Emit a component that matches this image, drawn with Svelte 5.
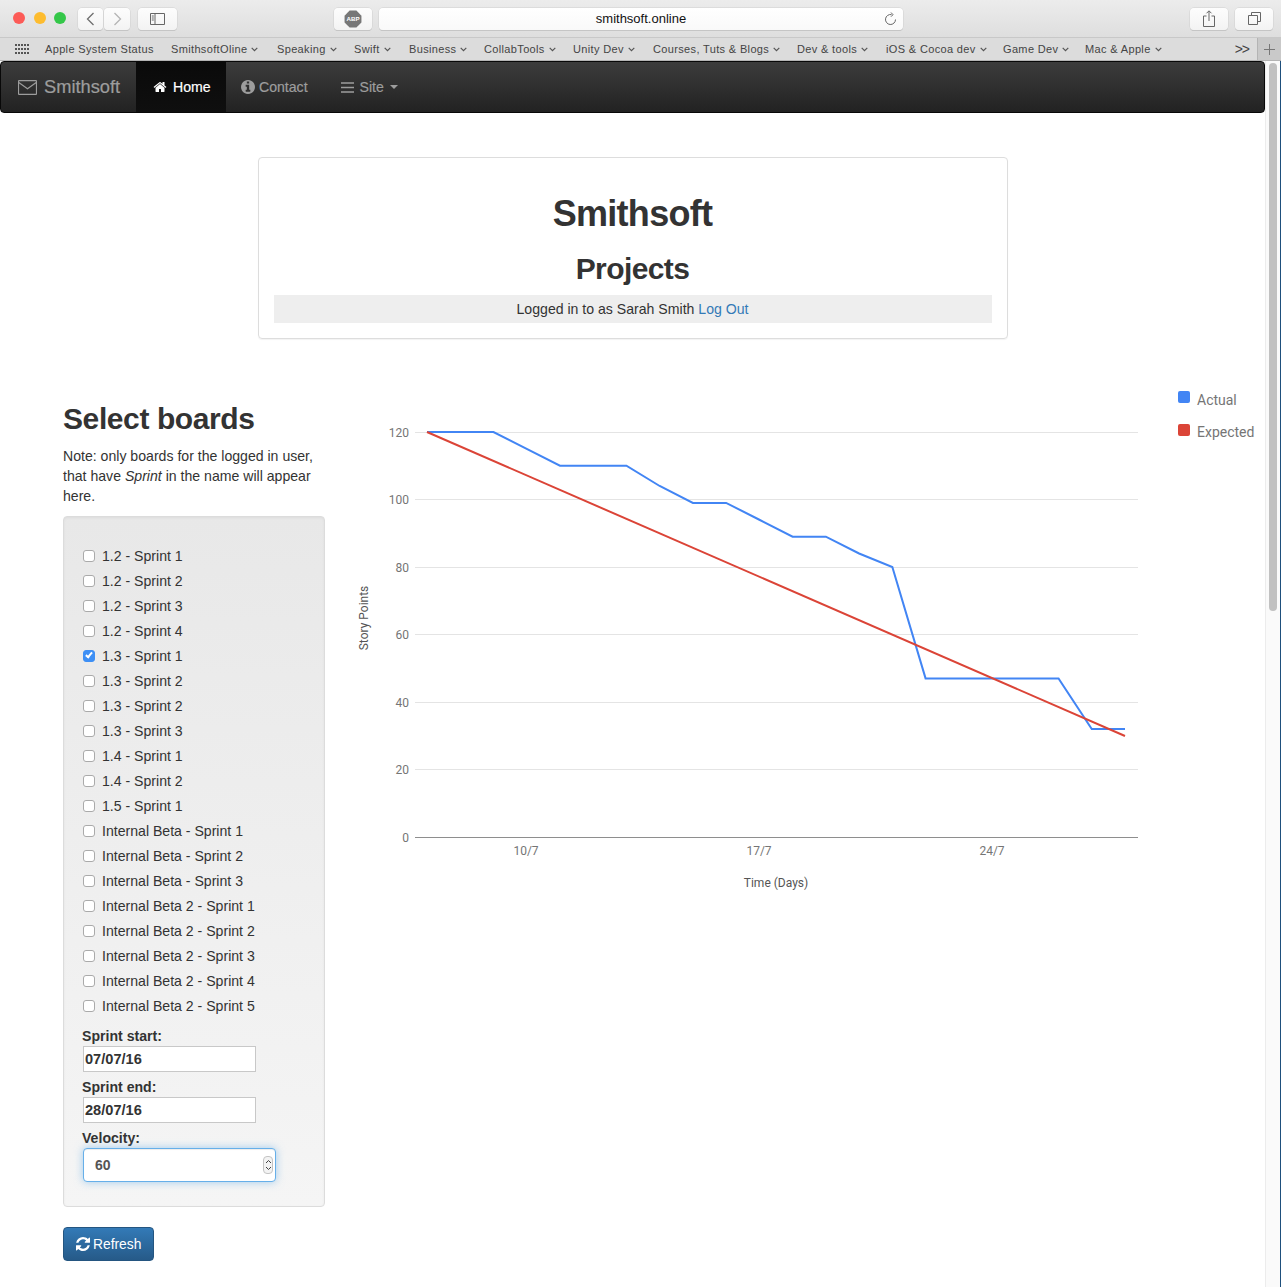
<script>
  // name and the width each bookmark takes up to the next one
  const bookmarks = [
    ['SmithsoftOline', 106],
    ['Speaking', 77],
    ['Swift', 55],
    ['Business', 75],
    ['CollabTools', 89],
    ['Unity Dev', 80],
    ['Courses, Tuts & Blogs', 144],
    ['Dev & tools', 89],
    ['iOS & Cocoa dev', 117],
    ['Game Dev', 82],
    ['Mac & Apple', 90]
  ];

  const boards = [
    '1.2 - Sprint 1', '1.2 - Sprint 2', '1.2 - Sprint 3', '1.2 - Sprint 4',
    '1.3 - Sprint 1', '1.3 - Sprint 2', '1.3 - Sprint 2', '1.3 - Sprint 3',
    '1.4 - Sprint 1', '1.4 - Sprint 2', '1.5 - Sprint 1',
    'Internal Beta - Sprint 1', 'Internal Beta - Sprint 2', 'Internal Beta - Sprint 3',
    'Internal Beta 2 - Sprint 1', 'Internal Beta 2 - Sprint 2', 'Internal Beta 2 - Sprint 3',
    'Internal Beta 2 - Sprint 4', 'Internal Beta 2 - Sprint 5'
  ];

  // chart scale, in page pixels
  const xAt = (d) => 427 + (698 / 21) * d;
  const yAt = (v) => 837 - v * 3.375;

  const actual = [120, 120, 120, 115, 110, 110, 110, 104, 99, 99, 94, 89, 89, 84, 80, 47, 47, 47, 47, 47, 32, 32];
  const actualPts = actual.map((v, d) => `${xAt(d)},${yAt(v)}`).join(' ');
  const yTicks = [120, 100, 80, 60, 40, 20];
  const xTicks = [['10/7', 526], ['17/7', 759], ['24/7', 992]];
</script>

<div class="window">
  <header class="toolbar">
    <div class="lights">
      <span class="light red"></span>
      <span class="light yellow"></span>
      <span class="light green"></span>
    </div>
    <div class="btn-pair">
      <button class="tool narrow" aria-label="Back">
        <svg width="9" height="14" viewBox="0 0 9 14"><path d="M7.5 1 1.5 7l6 6" fill="none" stroke="#6e6e6e" stroke-width="1.3"/></svg>
      </button>
      <button class="tool narrow" aria-label="Forward">
        <svg width="9" height="14" viewBox="0 0 9 14"><path d="M1.5 1l6 6-6 6" fill="none" stroke="#b4b4b4" stroke-width="1.3"/></svg>
      </button>
    </div>
    <button class="tool side" aria-label="Sidebar">
      <svg width="15" height="12" viewBox="0 0 15 12"><path d="M.5.5h14v11H.5zM5 .5v11M1.8 3h2M1.8 5h2M1.8 7h2" fill="none" stroke="#666"/></svg>
    </button>
    <button class="tool abp" aria-label="Adblock">
      <svg width="18" height="18" viewBox="0 0 16 16">
        <path d="M5 .5h6L15.500 5v6L11 15.500H5L.5 11V5z" fill="#777"/>
        <text x="8" y="10.200" text-anchor="middle" class="abp-text">ABP</text>
      </svg>
    </button>
    <div class="url">
      <span>smithsoft.online</span>
      <svg class="reload" width="13" height="14" viewBox="0 0 13 14"><path d="M7.500 2.600A5 5 0 1 0 11.500 7.500M7 .5l2 2.200-2 2" fill="none" stroke="#666" stroke-width="1"/></svg>
    </div>
    <button class="tool share" aria-label="Share">
      <svg width="12" height="17" viewBox="0 0 12 17"><path d="M3.500 6H.5v10.500h11V6h-3M6 11V1M3.500 3.300 6 .8l2.500 2.500" fill="none" stroke="#666"/></svg>
    </button>
    <button class="tool tabs" aria-label="Tabs">
      <svg width="13" height="13" viewBox="0 0 13 13"><path d="M3.500 3V.5h9v9H10M.5 3.500h9v9h-9z" fill="none" stroke="#666"/></svg>
    </button>
  </header>

  <nav class="bookmarks">
    <svg class="grid-icon" width="15" height="11" viewBox="0 0 15 11">
      {#each [0, 4, 8] as y}
        {#each [0, 3, 6, 9, 12] as x}
          <rect {x} {y} width="2" height="2" fill="#555" />
        {/each}
      {/each}
    </svg>
    <span class="bookmark" style="width:126px">Apple System Status</span>
    {#each bookmarks as [name, width]}
      <span class="bookmark" style="width:{width}px">
        {name}
        <svg width="7" height="5" viewBox="0 0 7 5"><path d="M.7.8 3.500 3.600 6.300.8" fill="none" stroke="#555" stroke-width="1.200"/></svg>
      </span>
    {/each}
    <span class="more">&gt;&gt;</span>
    <span class="plus">
      <svg width="11" height="11" viewBox="0 0 11 11"><path d="M5.500 0v11M0 5.500h11" stroke="#777"/></svg>
    </span>
  </nav>

  <div class="viewport">
    <div class="page">
      <div class="navbar">
        <a class="brand">
          <svg width="19" height="15" viewBox="0 0 19 15"><path d="M1 .7h17a.5.5 0 0 1 .5.5v12.600a.5.5 0 0 1-.5.5H1a.5.5 0 0 1-.5-.5V1.200A.5.5 0 0 1 1 .7zM.8 2.500l8.700 6.200 8.700-6.200" fill="none" stroke="#9d9d9d" stroke-width="1.200"/></svg>
          Smithsoft
        </a>
        <a class="item active">
          <svg width="14" height="14" viewBox="0 0 1792 1792"><path fill="#fff" d="M1472 992v480q0 26-19 45t-45 19h-384v-384h-256v384h-384q-26 0-45-19t-19-45v-480q0-1 .5-3t.5-3l575-474 575 474q1 2 1 6zm223-69l-62 74q-8 9-21 11h-3q-13 0-21-7l-692-577-692 577q-12 8-24 7-13-2-21-11l-62-74q-8-10-7-23.500t11-21.500l719-599q32-26 76-26t76 26l244 204v-195q0-14 9-23t23-9h192q14 0 23 9t9 23v408l219 182q10 8 11 21.500t-7 23.500z"/></svg>
          Home
        </a>
        <a class="item">
          <svg width="14" height="14" viewBox="128 128 1536 1536"><path fill="#9d9d9d" d="M1152 1376v-160q0-14-9-23t-23-9h-96v-512q0-14-9-23t-23-9h-320q-14 0-23 9t-9 23v160q0 14 9 23t23 9h96v320h-96q-14 0-23 9t-9 23v160q0 14 9 23t23 9h448q14 0 23-9t9-23zm-128-896v-160q0-14-9-23t-23-9h-192q-14 0-23 9t-9 23v160q0 14 9 23t23 9h192q14 0 23-9t9-23zm640 416q0 209-103 385.500t-279.500 279.500-385.500 103-385.500-103-279.500-279.500-103-385.500 103-385.500 279.500-279.500 385.500-103 385.500 103 279.500 279.500 103 385.500z"/></svg>
          Contact
        </a>
        <a class="item site">
          <svg width="13" height="11" viewBox="0 0 13 11"><path d="M0 1h13M0 5.500h13M0 10h13" stroke="#9d9d9d" stroke-width="1.700"/></svg>
          Site
          <span class="caret"></span>
        </a>
      </div>

      <section class="title-card">
        <h1>Smithsoft</h1>
        <h2>Projects</h2>
        <p class="login">Logged in to as Sarah Smith <a href="#logout">Log Out</a></p>
      </section>

      <div class="content">
        <aside class="left">
          <h2 class="select-title">Select boards</h2>
          <div class="note">
            <p>Note: only boards for the logged in user,</p>
            <p>that have <em>Sprint</em> in the name will appear</p>
            <p>here.</p>
          </div>
          <form class="well">
            <div class="boards">
              {#each boards as board, i}
                <label class="board">
                  <input type="checkbox" checked={i === 4} />
                  <span>{board}</span>
                </label>
              {/each}
            </div>
            <div class="fields">
              <label class="field-label" for="start">Sprint start:</label>
              <input id="start" class="date" type="text" value="07/07/16" />
              <label class="field-label" for="end">Sprint end:</label>
              <input id="end" class="date" type="text" value="28/07/16" />
              <label class="field-label" for="velocity">Velocity:</label>
              <div class="velocity-wrap">
                <input id="velocity" class="velocity" type="text" value="60" />
                <span class="spinner">
                  <svg width="7" height="16" viewBox="0 0 7 16"><path d="M1 6 3.500 3.500 6 6M1 10l2.500 2.500L6 10" fill="none" stroke="#444"/></svg>
                </span>
              </div>
            </div>
          </form>
          <button class="refresh" type="button">
            <svg width="14" height="14" viewBox="128 128 1536 1536"><path fill="#fff" d="M1639 1056q0 5-1 7-64 268-268 434.500t-478 166.500q-146 0-282.500-55t-243.500-157l-129 129q-19 19-45 19t-45-19-19-45v-448q0-26 19-45t45-19h448q26 0 45 19t19 45-19 45l-137 137q71 66 161 102t187 36q134 0 250-65t186-179q11-17 53-117 8-23 30-23h192q13 0 22.500 9.500t9.500 22.500zm25-800v448q0 26-19 45t-45 19h-448q-26 0-45-19t-19-45 19-45l138-138q-148-137-349-137-134 0-250 65t-186 179q-11 17-53 117-8 23-30 23h-199q-13 0-22.500-9.500t-9.500-22.500v-7q65-268 270-434.500t480-166.500q146 0 284 55.500t245 156.500l130-129q19-19 45-19t45 19 19 45z"/></svg>
            Refresh
          </button>
        </aside>

        <svg class="chart" width="915" height="520" viewBox="350 385 915 520">
          {#each yTicks as v}
            <line x1="415" x2="1138" y1={Math.floor(yAt(v)) + 0.5} y2={Math.floor(yAt(v)) + 0.5} stroke="#e4e4e4" />
            <text x="409" y={Math.floor(yAt(v)) + 5} text-anchor="end" class="tick">{v}</text>
          {/each}
          <line x1="415" x2="1138" y1="837.500" y2="837.500" stroke="#8e8e8e" />
          <text x="409" y="842" text-anchor="end" class="tick">0</text>
          {#each xTicks as [label, x]}
            <text {x} y="855" text-anchor="middle" class="tick">{label}</text>
          {/each}
          <text x="776" y="887" text-anchor="middle" class="axis">Time (Days)</text>
          <text transform="translate(368 618) rotate(-90)" text-anchor="middle" class="axis">Story Points</text>

          <polyline points={actualPts} fill="none" stroke="#4285f4" stroke-width="2" />
          <line x1="427" y1="432" x2="1125" y2="736" stroke="#db4437" stroke-width="2" />

          <rect x="1178" y="391" width="12" height="12" rx="2" fill="#4285f4" />
          <text x="1197" y="405" class="legend">Actual</text>
          <rect x="1178" y="424" width="12" height="12" rx="2" fill="#db4437" />
          <text x="1197" y="437" class="legend">Expected</text>
        </svg>
      </div>
    </div>

    <div class="scrollbar"><div class="thumb"></div></div>
  </div>
</div>

<style>
  :global(body) {
    background: #fff;
  }
  .window {
    width: 1281px;
    height: 1287px;
    overflow: hidden;
    display: flex;
    flex-direction: column;
    font-family: "Liberation Sans", Arial, sans-serif;
    font-size: 14.100px;
    color: #333;
  }

  /* browser chrome */
  .toolbar {
    height: 38px;
    box-sizing: border-box;
    display: flex;
    align-items: center;
    padding: 0 8px 0 12px;
    background: linear-gradient(#ececec, #dedede);
    border-bottom: 1px solid #c8c8c8;
    flex-shrink: 0;
  }
  .lights {
    display: flex;
    gap: 8.500px;
    width: 66px;
    margin-top: -1px;
    padding-left: 1px;
    box-sizing: border-box;
  }
  .light {
    width: 12px;
    height: 12px;
    border-radius: 50%;
  }
  .red { background: #fc5b57; }
  .yellow { background: #fdbc2f; }
  .green { background: #34c749; }
  .tool {
    height: 22px;
    padding: 0;
    display: flex;
    align-items: center;
    justify-content: center;
    background: linear-gradient(#fdfdfd, #f3f3f3);
    border: 0;
    border-radius: 4px;
    box-shadow: 0 0 0 0.5px #cfcfcf, 0 1px 0 #bbb;
  }
  .btn-pair {
    display: flex;
    gap: 1px;
  }
  .narrow { width: 25.500px; }
  .side { width: 39px; margin-left: 8px; }
  .abp { width: 38px; margin-left: 157px; }
  .abp-text {
    font-size: 5.500px;
    font-weight: 700;
    fill: #fff;
  }
  .url {
    width: 525px;
    height: 22px;
    margin-left: 7px;
    position: relative;
    display: flex;
    align-items: center;
    justify-content: center;
    background: linear-gradient(#fff, #f9f9f9);
    border-radius: 4px;
    box-shadow: 0 0 0 0.5px #cfcfcf, 0 1px 0 #bbb;
    font-size: 13px;
    color: #111;
  }
  .reload {
    position: absolute;
    right: 6px;
    top: 4px;
  }
  .share { width: 38px; margin-left: 287px; }
  .tabs { width: 38px; margin-left: 7px; }

  .bookmarks {
    height: 23px;
    box-sizing: border-box;
    flex-shrink: 0;
    display: flex;
    align-items: center;
    padding-left: 15px;
    background: #dcdcdc;
    border-bottom: 1px solid #b4b4b4;
    font-size: 11px;
    letter-spacing: 0.350px;
    color: #444;
    position: relative;
  }
  .grid-icon {
    margin-right: 15px;
  }
  .bookmark {
    display: flex;
    align-items: center;
    gap: 4px;
    flex-shrink: 0;
    white-space: nowrap;
  }
  .more {
    margin-left: auto;
    margin-right: 32px;
    font-size: 14px;
    letter-spacing: -1px;
  }
  .plus {
    position: absolute;
    right: 0;
    top: 0;
    width: 24px;
    height: 22px;
    display: flex;
    align-items: center;
    justify-content: center;
    background: #c9c9c9;
    border-left: 1px solid #b4b4b4;
    box-sizing: border-box;
  }

  .viewport {
    flex: 1;
    display: flex;
    min-height: 0;
  }
  .page {
    width: 1265px;
    flex-shrink: 0;
  }
  .scrollbar {
    width: 16px;
    box-sizing: border-box;
    padding: 2px 3px 0 3px;
    background: #fafafa;
    border-left: 1px solid #ececec;
    border-right: 1px solid #1e4f7c;
  }
  .thumb {
    width: 8px;
    height: 548px;
    border-radius: 4px;
    background: #c1c1c1;
  }

  /* bootstrap navbar */
  .navbar {
    height: 52px;
    box-sizing: border-box;
    display: flex;
    background: linear-gradient(#3c3c3c, #222);
    border: 1px solid #080808;
    border-radius: 4px;
    color: #9d9d9d;
    font-size: 14.100px;
  }
  .brand {
    display: flex;
    align-items: center;
    gap: 7px;
    width: 135px;
    box-sizing: border-box;
    padding-left: 17px;
    font-size: 18.300px;
    -webkit-text-stroke: 0.2px #9d9d9d;
  }
  .item {
    display: flex;
    align-items: center;
    gap: 4px;
    padding: 0 15px;
    -webkit-text-stroke: 0.2px currentColor;
  }
  .item.active {
    width: 90px;
    box-sizing: border-box;
    padding-left: 17px;
    gap: 6px;
    background: linear-gradient(#0a0a0a, #0f0f0f);
    color: #fff;
  }
  .item.site {
    gap: 6px;
    padding-left: 18px;
  }
  .caret {
    width: 0;
    height: 0;
    border-top: 4px solid #9d9d9d;
    border-left: 4px solid transparent;
    border-right: 4px solid transparent;
  }

  .title-card {
    width: 750px;
    height: 182px;
    box-sizing: border-box;
    margin: 44px auto 0;
    padding: 36px 15px 0;
    text-align: center;
    border: 1px solid #ddd;
    border-radius: 4px;
    box-shadow: 0 1px 1px rgba(0, 0, 0, 0.05);
  }
  h1 {
    margin: 0;
    font-size: 36px;
    line-height: 40px;
    font-weight: 700;
    letter-spacing: -0.700px;
  }
  h2 {
    margin: 0;
    font-weight: 700;
    letter-spacing: -0.600px;
  }
  .title-card h2 {
    margin-top: 18px;
    font-size: 30px;
    line-height: 34px;
  }
  .login {
    margin: 9px 0 0;
    height: 28px;
    line-height: 28px;
    background: #eee;
  }
  .login a {
    color: #337ab7;
    text-decoration: none;
  }

  .content {
    display: flex;
    margin-top: 46px;
    padding-left: 63px;
  }
  .left {
    width: 262px;
    flex-shrink: 0;
  }
  .select-title {
    margin-top: 17px;
    font-size: 30px;
    line-height: 34px;
    letter-spacing: -0.400px;
  }
  .note {
    margin-top: 10px;
    line-height: 20px;
  }
  .note p {
    margin: 0;
    white-space: nowrap;
  }
  .well {
    height: 691px;
    box-sizing: border-box;
    margin-top: 10px;
    padding: 26px 18px 0;
    background: linear-gradient(#e8e8e8, #f5f5f5);
    border: 1px solid #dcdcdc;
    border-radius: 4px;
    box-shadow: inset 0 1px 3px rgba(0, 0, 0, 0.05);
  }
  .boards {
    display: flex;
    flex-direction: column;
    margin-left: 1px;
  }
  .board {
    height: 25px;
    display: flex;
    align-items: center;
    gap: 7px;
  }
  .board input {
    appearance: none;
    width: 12px;
    height: 12px;
    margin: 0;
    position: relative;
    background: #fff;
    border: 1px solid #aaa;
    border-radius: 3px;
    box-sizing: border-box;
  }
  .board input:checked {
    background: #3d8ff5;
    border-color: #3d8ff5;
  }
  .board input:checked::after {
    content: "";
    position: absolute;
    left: 3px;
    top: 0.500px;
    width: 4px;
    height: 7px;
    border: solid #fff;
    border-width: 0 2px 2px 0;
    transform: rotate(40deg);
    box-sizing: border-box;
  }
  .fields {
    padding-top: 3px;
  }
  .field-label {
    display: block;
    margin-top: 6px;
    height: 19px;
    line-height: 19px;
    font-weight: 700;
  }
  .date {
    display: block;
    width: 173px;
    height: 26px;
    box-sizing: border-box;
    margin: 0 0 0 1px;
    padding: 0 1px;
    background: #fff;
    border: 1px solid #c8c8c8;
    font: 700 14.600px "Liberation Sans", Arial, sans-serif;
    color: #333;
  }
  .velocity-wrap {
    position: relative;
    width: 193px;
    margin-left: 1px;
  }
  .velocity {
    display: block;
    width: 100%;
    height: 34px;
    box-sizing: border-box;
    padding: 0 11px;
    background: #fff;
    border: 1px solid #66afe9;
    border-radius: 4px;
    box-shadow: inset 0 1px 1px rgba(0, 0, 0, 0.075), 0 0 8px rgba(102, 175, 233, 0.6);
    font: 700 14px "Liberation Sans", Arial, sans-serif;
    color: #555;
    outline: none;
  }
  .spinner {
    position: absolute;
    top: 8px;
    right: 3px;
    width: 10px;
    height: 18px;
    display: flex;
    justify-content: center;
    align-items: center;
    background: #f3f3f3;
    border: 1px solid #c4c4c4;
    border-radius: 4px;
    box-sizing: border-box;
  }
  .refresh {
    display: flex;
    align-items: center;
    gap: 3px;
    margin-top: 20px;
    width: 91px;
    height: 34px;
    padding: 0 0 0 12px;
    box-sizing: border-box;
    background: linear-gradient(#337ab7, #265a88);
    border: 1px solid #245580;
    border-radius: 4px;
    font: 13.800px "Liberation Sans", Arial, sans-serif;
    color: #fff;
  }

  .chart {
    margin-left: 25px;
    flex-shrink: 0;
    display: block;
    font-family: Roboto, sans-serif;
  }
  .tick {
    font-size: 12px;
    fill: #757575;
  }
  .axis {
    font-size: 12px;
    fill: #555;
  }
  .legend {
    font-size: 14px;
    fill: #757575;
  }
</style>
